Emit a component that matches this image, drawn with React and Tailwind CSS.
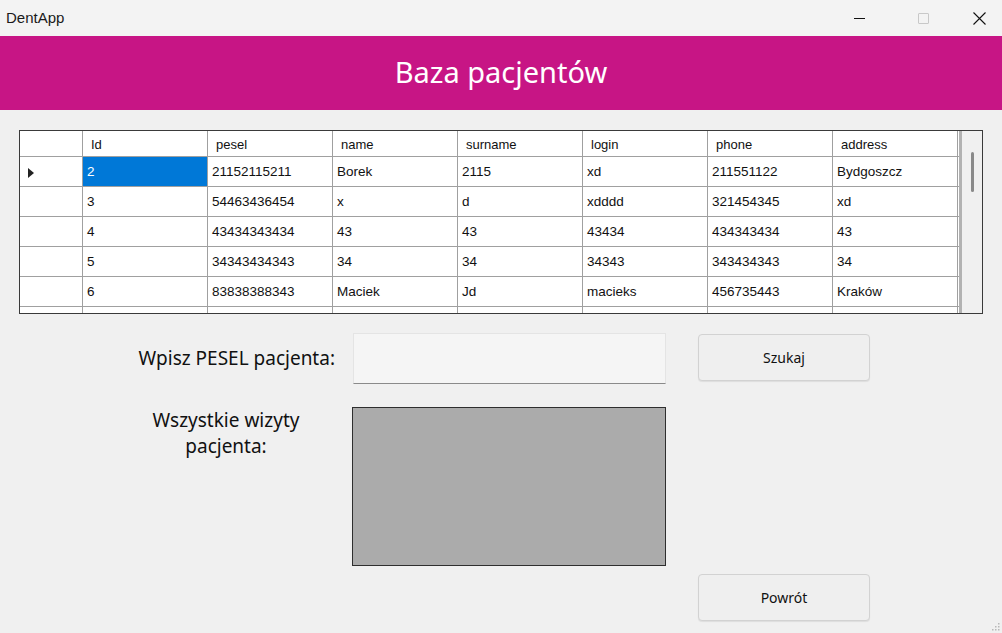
import React from "react";

const cols = ["Id", "pesel", "name", "surname", "login", "phone", "address"];
const rows = [
  ["2", "21152115211", "Borek", "2115", "xd", "211551122", "Bydgoszcz"],
  ["3", "54463436454", "x", "d", "xdddd", "321454345", "xd"],
  ["4", "43434343434", "43", "43", "43434", "434343434", "43"],
  ["5", "34343434343", "34", "34", "34343", "343434343", "34"],
  ["6", "83838388343", "Maciek", "Jd", "macieks", "456735443", "Kraków"],
  ["", "", "", "", "", "", ""],
];

const comic = { fontFamily: '"Comic Sans MS", "Noto Sans", sans-serif' };

export default function App() {
  return (
    <div className="w-[1002px] h-[633px] bg-[#f0f0f0] flex flex-col overflow-hidden relative">
      {/* Title bar */}
      <div className="h-[36px] bg-[#f3f3f3] flex items-center justify-between shrink-0" style={{ fontFamily: '"Liberation Sans", sans-serif' }}>
        <span className="ml-[6px] text-[15px] text-[#1a1a1a]">DentApp</span>
        <div className="flex h-full items-center">
          <div className="w-[46px] h-full flex items-center justify-center">
            <div className="w-[11px] h-px bg-[#111]" />
          </div>
          <div className="w-[58px] h-full flex items-center justify-center ml-[12px]">
            <div className="w-[11px] h-[11px] border border-[#c8c8c8] rounded-[1px]" />
          </div>
          <div className="w-[46px] h-full flex items-center justify-center ml-[4px]">
            <svg width="13" height="13" viewBox="0 0 13 13">
              <path d="M0.5 0.5 L12.5 12.5 M12.5 0.5 L0.5 12.5" stroke="#111" strokeWidth="1.1" />
            </svg>
          </div>
        </div>
      </div>

      {/* Header */}
      <div className="h-[74px] bg-[#c71585] flex items-center justify-center shrink-0">
        <span className="text-white text-[29px] mb-[2px]" style={comic}>Baza pacjentów</span>
      </div>

      {/* Data grid */}
      <div className="mt-[20px] ml-[19px] w-[964px] h-[184px] border border-[#3a3a3a] bg-[#f0f0f0] flex overflow-hidden shrink-0" style={{ fontFamily: '"Liberation Sans", sans-serif' }}>
        <div className="flex flex-col w-[939px] shrink-0 overflow-hidden">
          {/* header row */}
          <div className="flex h-[26px] shrink-0 bg-white border-b border-[#a0a0a0]">
            <div className="w-[63px] shrink-0 border-r border-[#a0a0a0]" />
            {cols.map((c) => (
              <div key={c} className="w-[125px] shrink-0 border-r border-[#a0a0a0] pl-[8px] pt-[3px] flex items-center text-[13px] text-[#111]">
                {c}
              </div>
            ))}
          </div>
          {rows.map((r, i) => (
            <div key={i} className="flex h-[30px] shrink-0 bg-white border-b border-[#a0a0a0]">
              <div className="w-[63px] shrink-0 border-r border-[#a0a0a0] flex items-center pl-[8px] pt-[2px]">
                {i === 0 && (
                  <svg width="6" height="10" viewBox="0 0 6 10">
                    <path d="M0 0 L6 5 L0 10 Z" fill="#222" />
                  </svg>
                )}
              </div>
              {r.map((v, j) => (
                <div
                  key={j}
                  className={
                    i === 0 && j === 0
                      ? "w-[125px] shrink-0 border-r border-[#a0a0a0] pl-[4px] pt-[2px] flex items-center text-[13.5px] bg-[#0078d7] text-white"
                      : "w-[125px] shrink-0 border-r border-[#a0a0a0] pl-[4px] pt-[2px] flex items-center text-[13.5px] text-[#111]"
                  }
                >
                  {v}
                </div>
              ))}
            </div>
          ))}
        </div>
        {/* scrollbar */}
        <div className="flex-1 bg-[#f0f0f0] border-l-[3px] border-[#b2b2b2] flex justify-center pt-[21px]">
          <div className="w-[3px] h-[40px] rounded-full bg-[#8a8a8a] ml-[1px]" />
        </div>
      </div>

      {/* Search row */}
      <div className="flex items-start mt-[19px] shrink-0">
        <div className="ml-[110px] w-[225px] h-[51px] flex items-center justify-end text-[19px] text-[#111]" style={comic}>
          Wpisz PESEL pacjenta:
        </div>
        <div className="ml-[18px] w-[313px] h-[51px] bg-[#f5f5f5] border border-[#e4e4e4] border-b-[#8a8a8a]" />
        <button className="ml-[32px] mt-px w-[172px] h-[47px] bg-[#efefef] border border-[#d2d2d2] rounded-[4px] shadow-[0_1px_1px_rgba(0,0,0,0.08)] text-[14px] text-[#111]" style={comic}>
          Szukaj
        </button>
      </div>

      {/* Visits row */}
      <div className="flex items-start mt-[23px] shrink-0">
        <div className="ml-[130px] w-[192px] text-center text-[19px] leading-[26px] text-[#111]" style={comic}>
          Wszystkie wizyty
          <br />
          pacjenta:
        </div>
        <div className="ml-[30px] w-[314px] h-[159px] bg-[#ababab] border border-[#2e2e2e]" />
      </div>

      {/* Back button */}
      <div className="flex mt-[8px] shrink-0">
        <button className="ml-[698px] w-[172px] h-[47px] bg-[#efefef] border border-[#d2d2d2] rounded-[4px] shadow-[0_1px_1px_rgba(0,0,0,0.08)] text-[14px] text-[#111]" style={comic}>
          Powrót
        </button>
      </div>

      {/* resize grip */}
      <svg className="absolute right-[2px] bottom-[2px]" width="8" height="8" viewBox="0 0 8 8">
        <rect x="6" y="0" width="1.5" height="1.5" fill="#b8b8b8" />
        <rect x="3" y="3" width="1.5" height="1.5" fill="#b8b8b8" />
        <rect x="6" y="3" width="1.5" height="1.5" fill="#b8b8b8" />
        <rect x="0" y="6" width="1.5" height="1.5" fill="#b8b8b8" />
        <rect x="3" y="6" width="1.5" height="1.5" fill="#b8b8b8" />
        <rect x="6" y="6" width="1.5" height="1.5" fill="#b8b8b8" />
      </svg>
    </div>
  );
}
